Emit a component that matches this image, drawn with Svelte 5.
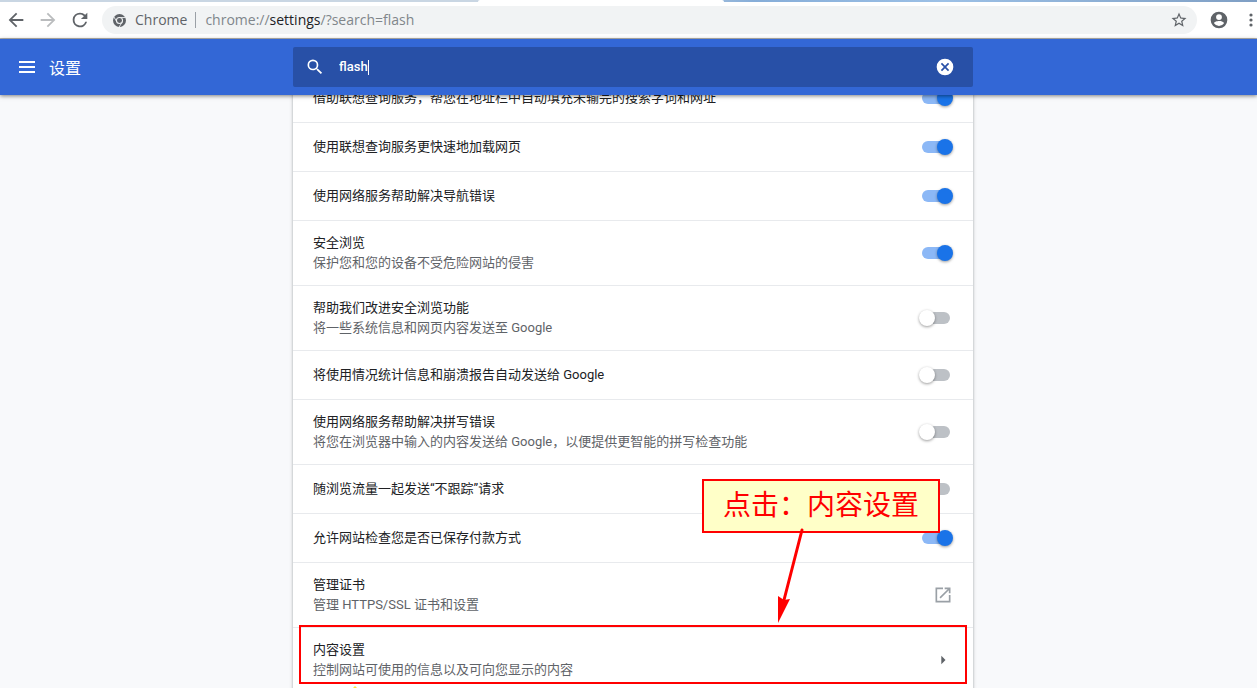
<script>
	let query = "flash";

	let rows = [
		{ title: "借助联想查询服务，帮您在地址栏中自动填充未输完的搜索字词和网址", on: true },
		{ title: "使用联想查询服务更快速地加载网页", on: true },
		{ title: "使用网络服务帮助解决导航错误", on: true },
		{ title: "安全浏览", sub: "保护您和您的设备不受危险网站的侵害", on: true },
		{ title: "帮助我们改进安全浏览功能", sub: "将一些系统信息和网页内容发送至 Google", on: false },
		{ title: "将使用情况统计信息和崩溃报告自动发送给 Google", on: false },
		{ title: "使用网络服务帮助解决拼写错误", sub: "将您在浏览器中输入的内容发送给 Google，以便提供更智能的拼写检查功能", on: false },
		{ title: "随浏览流量一起发送“不跟踪”请求", on: false },
		{ title: "允许网站检查您是否已保存付款方式", on: true },
	];
</script>

<div class="window">
	<div class="tabs"><span class="tab"></span></div>

	<nav class="toolbar">
		<button aria-label="后退">
			<svg width="22" height="22" viewBox="0 0 24 24"><path d="M20 11H7.83l5.59-5.59L12 4l-8 8 8 8 1.41-1.41L7.83 13H20z" /></svg>
		</button>
		<button class="dim" aria-label="前进">
			<svg width="22" height="22" viewBox="0 0 24 24"><path d="M12 4l-1.41 1.41L16.17 11H4v2h12.17l-5.58 5.59L12 20l8-8z" /></svg>
		</button>
		<button aria-label="重新加载">
			<svg width="22" height="22" viewBox="0 0 24 24"><path d="M17.65 6.35A7.96 7.96 0 0 0 12 4a8 8 0 1 0 7.73 10h-2.08A6 6 0 1 1 12 6c1.66 0 3.14.69 4.22 1.78L13 11h7V4z" /></svg>
		</button>

		<div class="omnibox">
			<svg width="13" height="13" viewBox="0 0 24 24">
				<circle cx="12" cy="12" r="12" />
				<path d="M12 6.5H23M7.2 14.8L1.8 5.5M16.8 14.8L11.4 24" fill="none" stroke="#f1f3f4" stroke-width="1.6" />
				<circle cx="12" cy="12" r="5.6" stroke="#f1f3f4" stroke-width="2" />
			</svg>
			<span class="site">Chrome</span>
			<span class="url">chrome://<b>settings</b>/?search=flash</span>
			<button aria-label="为此网页添加书签">
				<svg width="18" height="18" viewBox="0 0 24 24"><path d="M22 9.24l-7.19-.62L12 2 9.19 8.63 2 9.24l5.46 4.73L5.82 21 12 17.27 18.18 21l-1.63-7.03zM12 15.4l-3.76 2.27 1-4.28-3.32-2.88 4.38-.38L12 6.1l1.71 4.04 4.38.38-3.32 2.88 1 4.28z" /></svg>
			</button>
		</div>

		<button aria-label="用户">
			<svg width="20" height="20" viewBox="0 0 24 24"><path d="M12 2a10 10 0 1 0 0 20 10 10 0 0 0 0-20zm0 3a3.5 3.5 0 1 1 0 7 3.5 3.5 0 0 1 0-7zm0 14.2a7.2 7.2 0 0 1-6-3.22c.03-1.99 4-2.9 6-2.9s5.97.91 6 2.9a7.2 7.2 0 0 1-6 3.22z" /></svg>
		</button>
		<button class="more" aria-label="更多">
			<svg width="12" height="16" viewBox="0 0 12 16"><circle cx="6" cy="3" r="1.6" /><circle cx="6" cy="8" r="1.6" /><circle cx="6" cy="13" r="1.6" /></svg>
		</button>
	</nav>

	<header>
		<div class="brand">
			<button aria-label="主菜单">
				<svg width="16" height="12" viewBox="0 0 16 12"><path d="M0 0h16v2H0zM0 5h16v2H0zM0 10h16v2H0z" /></svg>
			</button>
			<h1>设置</h1>
		</div>
		<div class="search">
			<svg width="20" height="20" viewBox="0 0 24 24"><path d="M15.5 14h-.79l-.28-.27A6.47 6.47 0 0 0 16 9.5 6.5 6.5 0 1 0 9.5 16c1.61 0 3.09-.59 4.23-1.57l.27.28v.79l5 4.99L20.49 19zm-6 0a4.5 4.5 0 1 1 0-9 4.5 4.5 0 0 1 0 9z" /></svg>
			<label>
				<input type="text" bind:value={query} aria-label="在设置中搜索" size="4" />
				<span class="caret"></span>
			</label>
			<button aria-label="清除搜索内容" on:click={() => (query = "")}>
				<svg width="20" height="20" viewBox="0 0 24 24"><path d="M12 2a10 10 0 1 0 0 20 10 10 0 0 0 0-20zm5 13.59L15.59 17 12 13.41 8.41 17 7 15.59 10.59 12 7 8.41 8.41 7 12 10.59 15.59 7 17 8.41 13.41 12z" /></svg>
			</button>
		</div>
	</header>

	<main>
		<section class="card">
			{#each rows as row}
				<label class="row" class:double={row.sub}>
					<span class="text">
						<span class="title">{row.title}</span>
						{#if row.sub}
							<span class="sub">{row.sub}</span>
						{/if}
					</span>
					<input class="toggle" type="checkbox" bind:checked={row.on} />
				</label>
			{/each}

			<a class="row double" href="#certificates">
				<span class="text">
					<span class="title">管理证书</span>
					<span class="sub">管理 HTTPS/SSL 证书和设置</span>
				</span>
				<svg class="launch" width="20" height="20" viewBox="0 0 24 24"><path d="M19 19H5V5h7V3H3v18h18v-9h-2zM14 3v2h3.59l-9.83 9.83 1.41 1.41L19 6.41V10h2V3z" /></svg>
			</a>

			<a class="row double" href="#content">
				<span class="text">
					<span class="title">内容设置</span>
					<span class="sub">控制网站可使用的信息以及可向您显示的内容</span>
				</span>
				<svg class="chevron" width="20" height="20" viewBox="0 0 24 24"><path d="M10 7l5 5-5 5z" /></svg>
				<!-- tip of the search hit bubble -->
				<span class="bubble"></span>
				<span class="frame"></span>
				<span class="callout">点击：内容设置</span>
				<svg class="arrow" width="30" height="98" viewBox="0 0 30 98">
					<path d="M27 3L9 73" stroke="#f00" stroke-width="3" stroke-linecap="round" />
					<path d="M3 96V69l6 4 6-1z" fill="#f00" />
				</svg>
			</a>
		</section>
	</main>
</div>

<style>
	:global(body) {
		margin: 0;
		background: #f8f9fa;
	}

	.window {
		display: flex;
		flex-direction: column;
		height: 100vh;
		overflow: hidden;
		font-family: Roboto, "Noto Sans CJK SC", sans-serif;
		font-size: 13px;
		line-height: 20px;
		color: #202124;
	}

	svg {
		display: block;
		flex: none;
		fill: currentColor;
	}

	button {
		display: flex;
		align-items: center;
		justify-content: center;
		flex: none;
		width: 32px;
		height: 32px;
		padding: 0;
		border: 0;
		background: none;
		color: inherit;
		cursor: pointer;
	}

	.tabs {
		display: flex;
		flex: none;
		height: 2px;
		padding-left: 38%;
		background: linear-gradient(90deg, #c9d6e3 50%, #86add8 60%, #9cc0e6 75%, #7f9fc4);
	}
	.tab {
		width: 246px;
		background: white;
		border-radius: 2px 2px 0 0;
	}

	.toolbar {
		display: flex;
		align-items: center;
		flex: none;
		height: 36px;
		background: white;
		border-bottom: 1px solid #b6b4b0;
		color: #5f6368;
	}
	.dim {
		color: #babcbe;
	}
	.more {
		width: 22px;
		justify-content: flex-end;
	}

	.omnibox {
		display: flex;
		align-items: center;
		flex: 1;
		height: 28px;
		margin: 0 6px;
		padding: 0 2px 0 11px;
		border-radius: 14px;
		background: #f1f3f4;
		font-family: "Open Sans", "Noto Sans", sans-serif;
		font-size: 14px;
	}
	.site {
		margin-left: 9px;
		padding-right: 8px;
		border-right: 1px solid #9aa0a6;
		line-height: 16px;
	}
	.url {
		flex: 1;
		margin-left: 9px;
		color: #80868b;
	}
	.url b {
		font-weight: normal;
		color: #202124;
	}

	header {
		display: grid;
		grid-template-columns: 1fr 680px 1fr;
		align-items: center;
		flex: none;
		position: relative;
		z-index: 1;
		height: 56px;
		padding-left: 9px;
		box-sizing: border-box;
		background: #3367d6;
		box-shadow: 0 1px 4px rgba(0, 0, 0, 0.5);
		color: white;
	}
	.brand {
		display: flex;
		align-items: center;
		padding-left: 2px;
	}
	h1 {
		margin: 0 0 0 6px;
		padding-top: 3px;
		font-size: 16px;
		font-weight: normal;
	}

	.search {
		display: flex;
		align-items: center;
		height: 40px;
		padding: 0 12px;
		box-sizing: border-box;
		border-radius: 2px;
		background: #2850a7;
	}
	.search label {
		display: flex;
		align-items: center;
		flex: 1;
		margin-left: 14px;
	}
	.search input {
		field-sizing: content;
		padding: 0;
		border: 0;
		outline: 0;
		background: none;
		font: 500 13px/20px Roboto, "Noto Sans CJK SC", sans-serif;
		color: white;
	}
	.caret {
		width: 1px;
		height: 15px;
		background: white;
	}

	main {
		flex: 1;
		min-height: 0;
		padding-left: 9px;
		overflow: hidden;
		background: #f8f9fb;
	}

	/* list is scrolled partly under the header */
	.card {
		max-width: 680px;
		margin: -22px auto 0;
		background: white;
		box-shadow: 0 1px 2px rgba(60, 64, 67, 0.3), 0 1px 3px 1px rgba(60, 64, 67, 0.15);
	}

	.row {
		display: flex;
		align-items: center;
		justify-content: space-between;
		position: relative;
		height: 48px;
		padding: 0 20px;
		border-top: 1px solid #e8eaed;
		color: inherit;
		text-decoration: none;
	}
	.double {
		height: 64px;
	}
	.text {
		display: flex;
		flex-direction: column;
	}
	.sub {
		color: #5f6368;
	}

	.toggle {
		appearance: none;
		position: relative;
		width: 34px;
		height: 16px;
		margin: 0;
		cursor: pointer;
	}
	.toggle::before {
		content: "";
		position: absolute;
		top: 2px;
		left: 3px;
		width: 28px;
		height: 12px;
		border-radius: 6px;
		background: #bdc1c6;
	}
	.toggle::after {
		content: "";
		position: absolute;
		top: 0;
		left: 0;
		width: 16px;
		height: 16px;
		border-radius: 50%;
		background: white;
		box-shadow: 0 1px 3px rgba(0, 0, 0, 0.4);
	}
	.toggle:checked::before {
		background: #8cb8f6;
	}
	.toggle:checked::after {
		left: 18px;
		background: #1a73e8;
	}

	.launch {
		color: #9aa0a6;
	}
	.chevron {
		color: #5f6368;
	}

	.bubble {
		position: absolute;
		top: 58px;
		left: 56px;
		border: 6px solid transparent;
		border-top: 0;
		border-bottom-color: #fde345;
	}
	.frame {
		position: absolute;
		top: -3px;
		left: 6px;
		right: 6px;
		height: 55px;
		border: 2px solid #f00;
	}
	.callout {
		position: absolute;
		right: 33px;
		bottom: 159px;
		width: 234px;
		height: 50px;
		border: 2px solid #f00;
		background: #ffffc8;
		font-family: "Noto Sans CJK SC", sans-serif;
		font-size: 28px;
		line-height: 44px;
		text-align: center;
		white-space: nowrap;
		color: #f00;
	}
	.arrow {
		position: absolute;
		right: 168px;
		bottom: 67px;
	}
</style>
